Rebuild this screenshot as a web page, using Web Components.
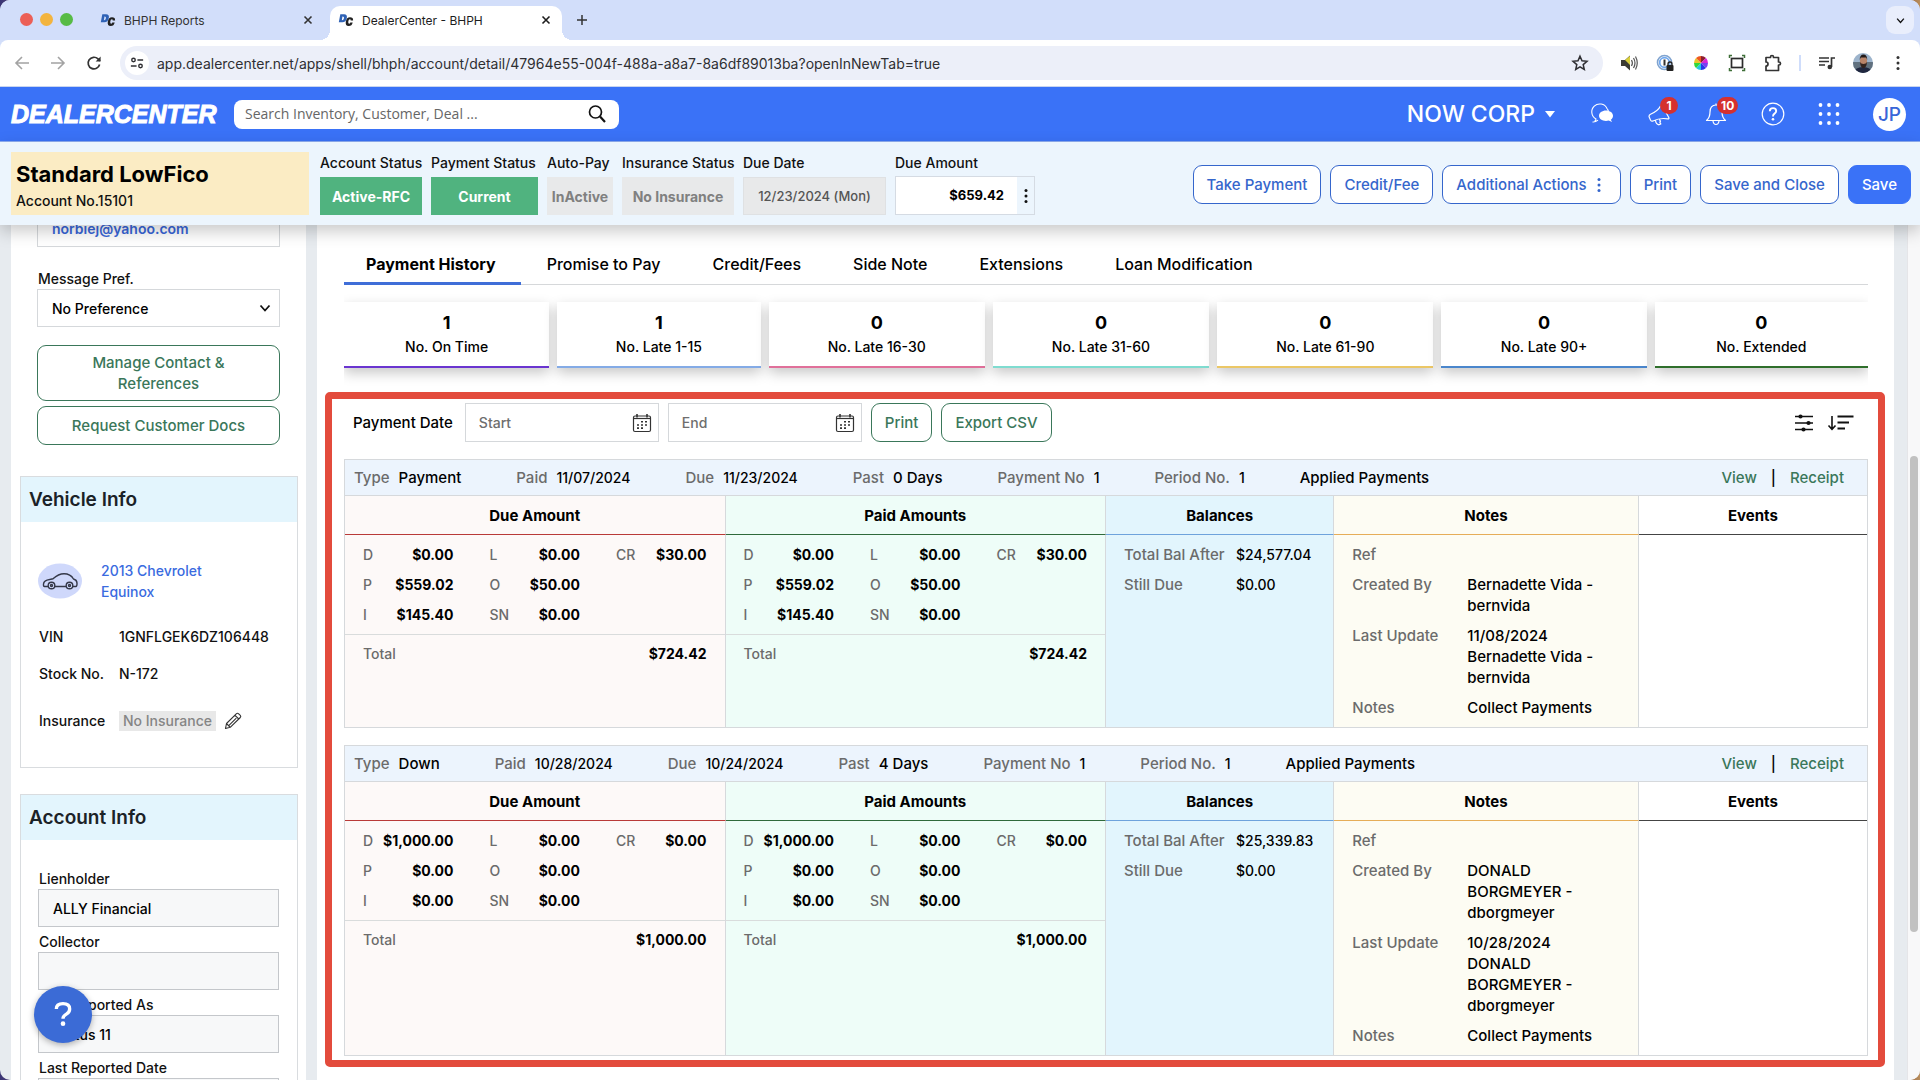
<!DOCTYPE html>
<html lang="en">
<head>
<meta charset="utf-8">
<title>DealerCenter - BHPH</title>
<style>
  html { height: 100%; background: linear-gradient(90deg, #3a3474, #5d4a78 1%, #8a5a45 99%, #b98d5a); }
  body { margin: 0; height: 100%; font-family: Inter, "Liberation Sans", sans-serif; font-size: 14px; line-height: 21px; font-weight: 500; color: #111; overflow: hidden; }
</style>
</head>
<body>
<bhph-window></bhph-window>
<script>
const ICONS = {
  close: ['0 0 12 12', '<path d="M2.5 2.5l7 7M9.5 2.5l-7 7" fill="none" stroke="currentColor" stroke-width="1.6"/>'],
  plus: ['0 0 12 12', '<path d="M6 1v10M1 6h10" fill="none" stroke="currentColor" stroke-width="1.5"/>'],
  chevron: ['0 0 12 12', '<path d="M1.5 3.5L6 8.5l4.500-5" fill="none" stroke="currentColor" stroke-width="1.800"/>'],
  back: ['0 0 16 16', '<path d="M15 8H2M8 2L2 8l6 6" fill="none" stroke="currentColor" stroke-width="1.6"/>'],
  forward: ['0 0 16 16', '<path d="M1 8h13M8 2l6 6-6 6" fill="none" stroke="currentColor" stroke-width="1.6"/>'],
  reload: ['0 0 16 16', '<path d="M13.600 9.500A5.800 5.800 0 1 1 12 3.900L14 6" fill="none" stroke="currentColor" stroke-width="1.700"/><path d="M14.600 1.600v5h-5z" fill="currentColor"/>'],
  tune: ['0 0 16 16', '<g fill="none" stroke="currentColor" stroke-width="1.600"><circle cx="4" cy="4.500" r="2"/><path d="M8.500 4.500H15M1 11.500h6.500"/><circle cx="12" cy="11.500" r="2"/></g>'],
  star: ['0 0 18 18', '<path d="M9 2.200l2 4.600 5 .5-3.800 3.300 1.100 4.900L9 12.900l-4.300 2.600 1.100-4.900L2 7.300l5-.5z" fill="none" stroke="currentColor" stroke-width="1.500"/>'],
  speaker: ['0 0 18 18', '<path d="M1 6h4l5-4.500v15L5 12H1z" fill="#3b3b33"/><path d="M5 6l5-4v9z" fill="#d9cf3a"/><path d="M11.500 6q1.800 3 0 6M13.500 4q3 5 0 10M15.500 2.500q3.500 6.500 0 13" fill="none" stroke="#555" stroke-width="1.200"/>'],
  onepass: ['0 0 18 18', '<circle cx="8.500" cy="8.500" r="7" fill="#fff" stroke="#7fa3cf" stroke-width="1.600"/><circle cx="8.500" cy="8.500" r="4.800" fill="none" stroke="#6fa8f0" stroke-width="1.800"/><path d="M8.500 5.500v6" stroke="#333" stroke-width="2"/><rect x="10.500" y="11" width="7" height="6" rx="1" fill="#222"/><path d="M12 11.500V10a2 2 0 0 1 4 0v1.500" fill="none" stroke="#222" stroke-width="1.300"/>'],
  wheel: ['-9 -9 18 18', '<g><path d="M0 0L0-7A7 7 0 0 1 5-5z" fill="#8d1f2f"/><path d="M0 0L5-5A7 7 0 0 1 7 0z" fill="#d625d6"/><path d="M0 0L7 0A7 7 0 0 1 5 5z" fill="#7a3ff0"/><path d="M0 0L5 5A7 7 0 0 1 0 7z" fill="#2a35e8"/><path d="M0 0L0 7A7 7 0 0 1-5 5z" fill="#25c7e0"/><path d="M0 0L-5 5A7 7 0 0 1-7 0z" fill="#2fd63a"/><path d="M0 0L-7 0A7 7 0 0 1-5-5z" fill="#e8c62a"/><path d="M0 0L-5-5A7 7 0 0 1 0-7z" fill="#ef5a1f"/></g>'],
  capture: ['0 0 18 18', '<rect x="3.500" y="4.500" width="11" height="9" fill="none" stroke="#2b2b2b" stroke-width="1.700"/><path d="M1.500 4V1.500H4M14 1.500h2.500V4M16.500 14v2.500H14M4 16.500H1.500V14" fill="none" stroke="#3f6f38" stroke-width="1.500"/>'],
  puzzle: ['0 0 18 18', '<path d="M2 3.500h4.500V3a1.500 1.500 0 0 1 3 0v.5H14.500V8h.5a1.500 1.500 0 0 1 0 3h-.5v5.500H2V12a2 2 0 0 0 0-4z" fill="none" stroke="#333" stroke-width="1.700" stroke-linejoin="round"/>'],
  playlist: ['0 0 18 18', '<path d="M1 4h10M1 7.500h10M1 11h6" stroke="#333" stroke-width="1.700"/><path d="M13.500 13V4H17" fill="none" stroke="#333" stroke-width="1.700"/><circle cx="11.800" cy="13" r="2.300" fill="#333"/>'],
  person: ['0 0 20 20', '<clipPath id="c"><circle cx="10" cy="10" r="10"/></clipPath><g clip-path="url(#c)"><rect width="20" height="20" fill="#9db4cc"/><path d="M0 9h20v11H0z" fill="#61717f"/><path d="M1 20q1-6 9-6t9 6z" fill="#20273f"/><ellipse cx="10.500" cy="8" rx="3.600" ry="5" fill="#b98468"/><path d="M6.700 7q0-5.500 3.800-5.500T14.200 7l-1-2.500H7.800z" fill="#221a18"/><path d="M7 9q.5 6 3.500 6t3.500-6q-1 2-3.500 2T7 9z" fill="#33231d"/></g>'],
  kebab: ['0 0 16 16', '<g fill="currentColor"><circle cx="8" cy="2.500" r="1.500"/><circle cx="8" cy="8" r="1.500"/><circle cx="8" cy="13.500" r="1.500"/></g>'],
  search: ['0 0 20 20', '<circle cx="8.500" cy="8" r="6" fill="none" stroke="currentColor" stroke-width="1.700"/><path d="M13 12.500l5 5.500" stroke="currentColor" stroke-width="2.200"/>'],
  caret: ['0 0 10 8', '<path d="M0 1h10L5 7.500z" fill="currentColor"/>'],
  chat: ['0 0 24 20', '<path d="M4.500 17.500q1.500-1.200 1.500-2.500A8 8 0 1 1 17 4.500q1 1.200 1.400 2.500M2.500 18q3 .3 5.500-1.800" fill="none" stroke="currentColor" stroke-width="1.100"/><path d="M16 6.500c4 0 7 2.300 7 5.200 0 1.700-.8 3-2.200 4l1.300 2.300-3.400-1.400q-1.300.3-2.700.3c-4 0-7-2.300-7-5.200s3-5.200 7-5.200z" fill="currentColor"/>'],
  horn: ['0 0 24 24', '<path d="M2 14.500q0-1.500 1.500-2.200Q11 9 13.500 4q.8-1.600 1.800 0l6.500 11.500q.6 1.500-1 1.400Q13 15.500 6 19q-1.500.6-2.400-.8zM8.500 18.200q.3 4 3.500 4.600l1.800-.9-1-1.700.7-.8-1.200-2.300" fill="none" stroke="currentColor" stroke-width="1.200" stroke-linejoin="round"/>'],
  bell: ['0 0 24 24', '<path d="M2.500 18.500q3.500-3 3.500-8.500 0-7 6-7t6 7q0 5.500 3.500 8.500zM12 3V1.500M9 19q.5 3.500 3 3.500t3-3.500" fill="none" stroke="currentColor" stroke-width="1.200" stroke-linejoin="round"/>'],
  help: ['0 0 24 24', '<circle cx="12" cy="12" r="10.800" fill="none" stroke="currentColor" stroke-width="1.200"/><path d="M8.800 9.300q0-3.200 3.200-3.200t3.200 2.900q0 1.500-1.700 2.600-1.500 1-1.500 2.800" fill="none" stroke="currentColor" stroke-width="1.900"/><circle cx="12" cy="17.300" r="1.300" fill="currentColor"/>'],
  apps: ['0 0 22 22', '<g fill="currentColor"><circle cx="2.500" cy="2" r="1.900"/><circle cx="11" cy="2" r="1.900"/><circle cx="19.500" cy="2" r="1.900"/><circle cx="2.500" cy="11" r="1.900"/><circle cx="11" cy="11" r="1.900"/><circle cx="19.500" cy="11" r="1.900"/><circle cx="2.500" cy="20" r="1.900"/><circle cx="11" cy="20" r="1.900"/><circle cx="19.500" cy="20" r="1.900"/></g>'],
  calendar: ['0 0 20 20', '<g fill="none" stroke="#333" stroke-width="1.200"><rect x="1.500" y="3" width="17" height="15.500" rx="1.500"/><path d="M1.500 5.500h17"/><path d="M5 1v3.500M15 1v3.500" stroke-width="1.600"/></g><g fill="#333"><path d="M9 8h2v1.600H9zM13 8h2v1.600h-2zM5 11.200h2v1.600H5zM9 11.200h2v1.600H9zM13 11.200h2v1.600h-2zM5 14.300h2v1.600H5zM9 14.300h2v1.600H9z"/></g>'],
  sliders: ['0 0 18 18', '<path d="M0 2.500h18M0 9h18M0 15.500h18" stroke="#111" stroke-width="1.600"/><g fill="#111"><circle cx="5.500" cy="2.500" r="2.100"/><circle cx="13.500" cy="9" r="2.100"/><circle cx="8.500" cy="15.500" r="2.100"/></g>'],
  sort: ['0 0 26 18', '<path d="M4 2v13M.5 11.500L4 15.300l3.500-3.800" fill="none" stroke="#111" stroke-width="1.600"/><path d="M9.500 2.500H25.500M9.500 8.500h11.500M9.500 14.500h7.500" stroke="#111" stroke-width="1.800"/>'],
  car: ['0 0 44 36', '<ellipse cx="22" cy="18" rx="22" ry="17.500" fill="#cfd8fb"/><g fill="none" stroke="#343849" stroke-width="1.400"><path d="M10 23.500H6.500q-1.200 0-1-2.500.2-3 3.500-3.900l6-1.300q5.500-5 11-5 6.500 0 9.500 5.200 3.300.8 3.500 4 .1 3.200-1 3.500H35M17 23.500h11"/><circle cx="13.500" cy="22.500" r="3.300"/><circle cx="31.500" cy="22.500" r="3.300"/><circle cx="13.500" cy="22.500" r="1"/><circle cx="31.500" cy="22.500" r="1"/></g>'],
  pencil: ['0 0 18 18', '<path d="M1.500 16.500l1-5L12.500 1.700q1-.9 2.200.1l1.600 1.500q1 1.100 0 2.200L6.200 15.300zM11 3.300l3.800 3.700M2.500 11.500l3.700 3.800M12.300 6.200L5 13.300" fill="none" stroke="#333" stroke-width="1.100" stroke-linejoin="round"/>'],
  favicon: ['0 0 18 16', '<path d="M2.600 1.500h4.200q4 0 3.100 4.400-.9 4.600-5 4.600H.9zM5 4L4.300 8.200q1.900.3 2.400-2.200Q7.200 3.800 5 4z" fill="#2f62b5" fill-rule="evenodd"/><path d="M17 8.500h-2.700q.2-1.400-1-1.400-1.300 0-1.700 2.400-.4 2.600.8 2.600 1.100 0 1.400-1.400h2.700q-.7 4-4.500 4-4 0-3.200-5.100Q9.700 4.800 13.500 4.800T17 8.500z" fill="#222"/>'],
  question: ['0 0 24 32', '<path d="M4 9.500Q4 3 12 3t8 6.300q0 3.700-4 6.200-4 2.300-4 5.500" fill="none" stroke="currentColor" stroke-width="4"/><circle cx="12" cy="27" r="2.800" fill="currentColor"/>']
};
const RESET = `
  *, *::before, *::after { box-sizing: border-box; }
  button, input, select { font: inherit; color: inherit; margin: 0; padding: 0; border: 0; background: none; letter-spacing: inherit; }
  button { cursor: pointer; }
  input { min-width: 0; width: 100%; outline: 0; }
  a { color: inherit; text-decoration: none; }
  h1, h2, p, dl, dd, dt { margin: 0; font-size: inherit; font-weight: inherit; }
  :host([hidden]) { display: none; }
`;
function define(name, render) {
  customElements.define(name, class extends HTMLElement {
    connectedCallback() {
      if (this.shadowRoot) return;
      const t = document.createElement('template');
      t.innerHTML = `<style>${RESET}</style>` + render(this);
      this.attachShadow({ mode: 'open' }).append(t.content.cloneNode(true));
    }
  });
}

define('dc-icon', el => {
  const [box, body] = ICONS[el.getAttribute('name')];
  return `<style>:host{display:inline-flex;flex:none;width:var(--s,18px);height:var(--h,var(--s,18px))} svg{width:100%;height:100%;overflow:visible}</style>
  <svg viewBox="${box}" aria-hidden="true">${body}</svg>`;
});

define('browser-tab', el => `<style>
  :host{display:flex;align-items:center;gap:8px;width:232px;height:34px;padding:0 10px 6px 8px;font-size:12px;font-weight:400;color:#333}
  :host([active]){background:#fff;border-radius:10px 10px 0 0;color:#1d1d1d;position:relative}
  :host([active])::before,:host([active])::after{content:"";position:absolute;bottom:0;width:10px;height:10px}
  :host([active])::before{left:-10px;background:radial-gradient(circle at 0 0,transparent 10px,#fff 10px)}
  :host([active])::after{right:-10px;background:radial-gradient(circle at 100% 0,transparent 10px,#fff 10px)}
  span{flex:1;white-space:nowrap} button{display:flex}
  </style><dc-icon name="favicon" style="--s:16px"></dc-icon><span><slot></slot></span>
  <button aria-label="Close tab"><dc-icon name="close" style="--s:12px"></dc-icon></button>`);

define('browser-chrome', () => `<style>
  :host{display:block;background:#d2defa;color:#333}
  .strip{display:flex;align-items:flex-end;height:40px;padding:0 6px 0 20px}
  .lights{display:flex;gap:7px;padding:0 19px 14px 0}
  .lights i{width:13px;height:13px;border-radius:50%;background:var(--c)}
  .tabs{display:flex;gap:6px}
  .new{display:flex;margin:0 0 14px 14px}
  .more{display:grid;place-items:center;margin:0 0 6px auto;width:28px;height:28px;border-radius:9px;background:#e9eefc;color:#111}
  .bar{display:flex;align-items:center;height:47px;padding:0 14px;background:#fff;border-radius:8px 8px 0 0;border-bottom:1px solid #c9d5ef}
  .nav{display:flex;gap:20px;width:106px} .nav button{display:flex}
  .off{color:#a3a3a3}
  .url{flex:1;display:flex;align-items:center;gap:8px;height:34px;border-radius:17px;background:#eceff9;padding:0 14px 0 5px;font-size:14px;font-weight:400;color:#2f2f33}
  .chip{flex:none;display:grid;place-items:center;width:24px;height:24px;border-radius:50%;background:#fff}
  .ext{display:flex;align-items:center;gap:18px;padding-left:17px}
  .sep{width:2px;height:16px;margin:0 -1px;background:#cfddfb}
  .me{margin:0 -1px}
  </style>
  <div class="strip"><div class="lights"><i style="--c:#ec5f56"></i><i style="--c:#f3b43e"></i><i style="--c:#57bb45"></i></div>
   <div class="tabs"><browser-tab>BHPH Reports</browser-tab><browser-tab active>DealerCenter - BHPH</browser-tab></div>
   <button class="new" aria-label="New tab"><dc-icon name="plus" style="--s:12px"></dc-icon></button>
   <button class="more" aria-label="Search tabs"><dc-icon name="chevron" style="--s:9px"></dc-icon></button></div>
  <div class="bar"><div class="nav"><button class="off" aria-label="Back"><dc-icon name="back" style="--s:16px"></dc-icon></button><button class="off" aria-label="Forward"><dc-icon name="forward" style="--s:16px"></dc-icon></button><button aria-label="Reload"><dc-icon name="reload" style="--s:16px"></dc-icon></button></div>
   <div class="url"><span class="chip"><dc-icon name="tune" style="--s:14px"></dc-icon></span><input aria-label="Address" value="app.dealercenter.net/apps/shell/bhph/account/detail/47964e55-004f-488a-a8a7-8a6df89013ba?openInNewTab=true"><dc-icon name="star"></dc-icon></div>
   <div class="ext"><dc-icon name="speaker"></dc-icon><dc-icon name="onepass"></dc-icon><dc-icon name="wheel"></dc-icon><dc-icon name="capture"></dc-icon><dc-icon name="puzzle"></dc-icon><span class="sep"></span><dc-icon name="playlist"></dc-icon><dc-icon class="me" name="person" style="--s:20px"></dc-icon><dc-icon name="kebab" style="--s:16px"></dc-icon></div></div>`);

define('notice-icon', el => `<style>
  :host{display:block;position:relative;width:24px;height:24px}
  b{position:absolute;left:13px;top:-5px;min-width:18px;height:17px;padding:0 4px;border-radius:9px;background:#d5302f;font-size:12px;line-height:17px;font-weight:700;text-align:center}
  </style><dc-icon name="${el.getAttribute('name')}" style="--s:24px"></dc-icon><b><slot></slot></b>`);

define('app-header', () => `<style>
  :host{display:flex;align-items:center;height:55px;padding:0 14px 0 11px;background:#3a72f7;color:#fff;border-bottom:1px solid #8faef2}
  .logo{font:italic 700 25px/30px "Liberation Sans",sans-serif;-webkit-text-stroke:1px #fff;width:223px;flex:none}
  .search{display:flex;align-items:center;width:385px;height:29px;padding:0 12px 0 11px;background:#fff;border-radius:8px;color:#111}
  .search input{font:400 14px/20px "Open Sans",sans-serif} ::placeholder{color:#666;opacity:1}
  .right{display:flex;align-items:center;gap:33px;margin-left:auto}
  .org{display:flex;align-items:center;gap:10px;margin-right:2px;font-size:23px}
  button{display:flex}
  .me{display:grid;place-items:center;width:33px;height:33px;border-radius:50%;background:#fff;color:#3866d8;font-size:19px;font-weight:500}
  </style>
  <a class="logo" href="#">DEALERCENTER</a>
  <div class="search"><input aria-label="Search" placeholder="Search Inventory, Customer, Deal ..."><dc-icon name="search" style="--s:20px"></dc-icon></div>
  <div class="right"><button class="org">NOW CORP <dc-icon name="caret" style="--s:10px;--h:8px"></dc-icon></button>
  <dc-icon name="chat" style="--s:24px;--h:20px"></dc-icon><notice-icon name="horn">1</notice-icon><notice-icon name="bell">10</notice-icon><dc-icon name="help" style="--s:24px"></dc-icon><dc-icon name="apps" style="--s:22px"></dc-icon><button class="me">JP</button></div>`);

define('dc-button', el => `<style>
  :host{display:block;font-size:15px}
  button{display:flex;align-items:center;justify-content:center;gap:4px;width:100%;min-height:39px;padding:var(--pad,0 13px);border:1px solid currentColor;border-radius:9px;background:#fff;color:#3566cc;line-height:21px;white-space:var(--wrap,nowrap)}
  :host([tone=green]) button{color:#3a775a}
  :host([tone=solid]) button{background:#3a72f7;border-color:#3a72f7;color:#fff}
  </style><button><slot></slot></button>`);

define('status-field', el => `<style>
  :host{display:block;flex:none;width:var(--w)}
  span,output{display:block;white-space:nowrap}
  output{display:grid;place-items:center;height:38px;margin-top:4px;background:#e8e9ea;color:#808080;font-weight:700}
  :host([tone=good]) output{background:#50b37f;color:#fff}
  :host([tone=date]) output{border:1px solid #dfe1e3;color:#555;font-size:13px;font-weight:500}
  </style><span id="l">${el.getAttribute('label')}</span><output aria-labelledby="l"><slot></slot></output>`);

define('account-bar', () => `<style>
  :host{display:flex;align-items:flex-start;gap:9px;height:83px;padding:10px 9px 0 11px;background:#ecf5fd;box-shadow:0 6px 16px rgba(0,0,0,.22);position:relative;z-index:2}
  .who{width:298px;height:63px;margin-right:2px;padding:8px 5px;background:#fbecc4;flex:none}
  h1{font-size:22px;line-height:28px;font-weight:700;color:#000} .who p{line-height:26px} .who b{font-weight:500}
  .due{width:140px;flex:none} .due label{display:block}
  .box{display:flex;height:39px;margin-top:3px;border:1px solid #d5dbe3;background:#fff}
  .box input{padding-right:13px;text-align:right;font-size:13px;font-weight:700;color:#000}
  .box button{display:grid;place-items:center;flex:none;width:17px;background:#ecf5fd}
  .acts{display:flex;gap:9px;margin:13px 0 0 auto}
  </style>
  <div class="who"><h1>Standard LowFico</h1><p>Account No.<b>15101</b></p></div>
  <status-field label="Account Status" tone="good" style="--w:102px">Active-RFC</status-field>
  <status-field label="Payment Status" tone="good" style="--w:107px">Current</status-field>
  <status-field label="Auto-Pay" style="--w:66px">InActive</status-field>
  <status-field label="Insurance Status" style="--w:112px">No Insurance</status-field>
  <status-field label="Due Date" tone="date" style="--w:143px">12/23/2024 (Mon)</status-field>
  <div class="due"><label for="due">Due Amount</label><div class="box"><input id="due" value="$659.42"><button aria-label="Due amount options"><dc-icon name="kebab" style="--s:16px"></dc-icon></button></div></div>
  <div class="acts"><dc-button>Take Payment</dc-button><dc-button>Credit/Fee</dc-button><dc-button>Additional Actions <dc-icon name="kebab" style="--s:16px"></dc-icon></dc-button><dc-button>Print</dc-button><dc-button>Save and Close</dc-button><dc-button tone="solid">Save</dc-button></div>`);

define('text-field', el => `<style>
  :host{display:block} label{display:block;padding-left:1px}
  input{height:38px;padding:0 14px;border:1px solid #c4c7cb;background:#f7f8f9;color:#000}
  </style><label for="f">${el.getAttribute('label')}</label><input id="f" value="${el.getAttribute('value') || ''}">`);

define('info-card', el => `<style>
  :host{display:block;border:1px solid #d9dcdf;background:#fff}
  h2{height:45px;padding:0 8px;background:#e3f5fd;font-size:19px;line-height:45px;font-weight:600;color:#1b2227}
  div{padding:var(--body)}
  </style><h2>${el.getAttribute('heading')}</h2><div><slot></slot></div>`);

define('contact-panel', () => `<style>
  :host{display:block;padding:0 18px 0 17px}
  .mail{display:flex;align-items:center;height:38px;padding:0 14px;border:1px solid #d5d8db;color:#3866d8;font-weight:600}
  label{display:block;margin-top:21px;padding-left:1px}
  .sel{display:grid;align-items:center;border:1px solid #d5d8db;height:38px}
  .sel>*{grid-area:1/1} .sel dc-icon{justify-self:end;margin-right:8px}
  select{appearance:none;width:100%;height:36px;padding:0 14px;color:#000}
  .b1{margin-top:18px;--wrap:normal;--pad:6px 50px} .b2{margin-top:5px}
  </style>
  <a class="mail" href="#">norbiej@yahoo.com</a>
  <label for="p">Message Pref.</label><div class="sel"><select id="p"><option>No Preference</option></select><dc-icon name="chevron" style="--s:12px"></dc-icon></div>
  <dc-button class="b1" tone="green">Manage Contact &amp; References</dc-button><dc-button class="b2" tone="green">Request Customer Docs</dc-button>`);

define('vehicle-info', () => `<style>
  :host{display:block}
  .car{display:flex;align-items:center;gap:19px;height:42px;color:#3a6be0}
  dl{display:grid;grid-template-columns:80px 1fr;padding-left:1px;margin-top:24px;row-gap:16px} dd{display:flex;align-items:center;gap:8px}
  .last{margin-top:10px}
  .chip{padding:0 4px;background:#e8e8e8;color:#858585;line-height:20px;white-space:nowrap}
  dd button{display:flex}
  </style>
  <div class="car"><dc-icon name="car" style="--s:44px;--h:36px"></dc-icon><a href="#">2013 Chevrolet<br>Equinox</a></div>
  <dl><dt>VIN</dt><dd>1GNFLGEK6DZ106448</dd><dt>Stock No.</dt><dd>N-172</dd><dt class="last">Insurance</dt><dd class="last"><span class="chip">No Insurance</span><button aria-label="Edit insurance"><dc-icon name="pencil"></dc-icon></button></dd></dl>`);

define('side-panel', () => `<style>
  :host{display:block;flex:none;width:295px;background:#fff;padding:0 8px 0 9px}
  .in{margin-top:-16px} info-card{display:block}
  .v{margin-top:31px;--body:38px 17px 36px} .a{margin-top:26px;--body:28px 18px 28px 17px}
  .form{display:grid;gap:4px}
  </style><div class="in"><contact-panel></contact-panel>
  <info-card class="v" heading="Vehicle Info"><vehicle-info></vehicle-info></info-card>
  <info-card class="a" heading="Account Info"><div class="form"><text-field label="Lienholder" value="ALLY Financial"></text-field><text-field label="Collector"></text-field><text-field label="Last Reported As" value="Status 11"></text-field><text-field label="Last Reported Date"></text-field></div></info-card></div>`);

define('tab-nav', () => `<style>
  :host{display:flex;border-bottom:1px solid #d6d8da;font-size:16px;padding-top:21px;color:#000}
  button{height:39px;margin-bottom:-1px;padding:0 26px;white-space:nowrap;line-height:36px;border-bottom:3px solid transparent}
  .on{padding:0 25px 0 22px;border-color:#3f6ed8;font-weight:700}
  </style><button class="on">Payment History</button><button>Promise to Pay</button><button>Credit/Fees</button><button>Side Note</button><button>Extensions</button><button>Loan Modification</button>`);

define('stat-card', el => `<style>
  :host{display:block;height:66px;padding-top:9px;text-align:center;background:#fff;border-bottom:2px solid var(--c);box-shadow:0 5px 12px rgba(0,0,0,.22);color:#000}
  b{display:block;font-size:18px;line-height:24px;font-weight:700} span{display:block;line-height:24px}
  </style><b>${el.getAttribute('count')}</b><span><slot></slot></span>`);

define('date-field', el => `<style>
  :host{display:flex;align-items:center;width:194px;height:39px;padding:0 6px 0 13px;border:1px solid #d5d8db;background:#fff}
  ::placeholder{color:#6e6e6e;opacity:1} button{display:flex}
  </style><input aria-label="${el.getAttribute('label')}" placeholder="${el.getAttribute('label')}"><button aria-label="Pick date"><dc-icon name="calendar" style="--s:20px"></dc-icon></button>`);

define('filter-bar', () => `<style>
  :host{display:flex;align-items:center;gap:9px;padding-left:9px;color:#000}
  .t{font-size:15px;margin-right:3px}
  .ic{display:flex;gap:15px;margin:0 14px 0 auto} .ic button{display:flex}
  </style><span class="t">Payment Date</span><date-field label="Start"></date-field><date-field label="End"></date-field><dc-button tone="green">Print</dc-button><dc-button tone="green">Export CSV</dc-button>
  <div class="ic"><button aria-label="Filter"><dc-icon name="sliders"></dc-icon></button><button aria-label="Sort"><dc-icon name="sort" style="--s:26px;--h:18px"></dc-icon></button></div>`);

define('amount-panel', el => {
  const v = el.getAttribute('values').split(' ');
  const item = (k, i) => `<div><dt>${k}</dt><dd>${v[i]}</dd></div>`;
  return `<style>
  :host{display:block}
  dl{display:grid;grid-template-columns:repeat(3,1fr);grid-template-rows:repeat(3,21px);grid-auto-flow:column;gap:9px 36px;padding:9px 18px}
  dl div,p{display:flex;justify-content:space-between} dt,p span{color:#6b6b6b} dd,b{font-weight:700;color:#000}
  p{padding:8px 18px;border-top:1px solid #d9dcdc}
  </style><dl>${['D','P','I','L','O','SN','CR'].map(item).join('')}</dl><p><span>Total</span><b>${v[7]}</b></p>`;
});

define('pair-list', el => `<style>
  :host{display:block;padding:9px 18px;font-size:15px}
  dl{display:grid;grid-template-columns:var(--k) 1fr;row-gap:9px;min-width:0} dt{color:#6b6b6b;white-space:nowrap} dd{color:#000;min-height:21px}
  :host([money]) dd{font-size:14px}
  </style><dl>${el.getAttribute('pairs').split(';').map(p => { const [k, v] = p.split('='); return `<dt>${k}</dt><dd>${v}</dd>`; }).join('')}</dl>`);

define('payment-card', el => {
  const a = n => el.getAttribute(n);
  const fact = (k, v, c = '') => `<span class="f ${c}"><i>${k}</i>${v}</span>`;
  return `<style>
  :host{display:block;border:1px solid #d6d9dc;background:#fff;color:#000}
  .top{display:flex;align-items:center;gap:55px;height:36px;padding:0 23px 0 9px;background:#ecf4fd;border-bottom:1px solid #d6d9dc;white-space:nowrap;font-size:15px}
  .f{display:flex;gap:9px;font-size:14px} .f.word{font-size:15px} i{font-style:normal;font-size:15px;color:#6b6b6b}
  .links{display:flex;gap:14px;margin-left:auto} a{color:#3a775a}
  table{width:100%;table-layout:fixed;border-collapse:separate;border-spacing:0}
  th{height:39px;padding:0;font-size:15px;font-weight:700;border-bottom:1px solid var(--c)} td{padding:0;vertical-align:top}
  th,td{border-right:1px solid #d6d9dc} th:last-child,td:last-child{border-right:0}
  .due{--c:#b93a38;background:#fdf9f8} .paid{--c:#2f6a3b;background:#eefdf8} .bal{--c:#6ea3dc;background:#e2f5fd} .note{--c:#e6ad58;background:#fdfcf3} .ev{--c:#444}
  .bal pair-list{--k:112px;margin-right:-18px} .note pair-list{--k:115px}
  </style>
  <div class="top">${fact('Type', a('type'), 'word')}${fact('Paid', a('paid'))}${fact('Due', a('due'))}${fact('Past', a('past'), 'word')}${fact('Payment No', a('no'))}${fact('Period No.', a('period'))}<span>Applied Payments</span>
   <span class="links"><a href="#">View</a><span>|</span><a href="#">Receipt</a></span></div>
  <table><colgroup><col style="width:25%"><col style="width:25%"><col style="width:15%"><col style="width:20%"><col style="width:15%"></colgroup>
  <thead><tr><th class="due">Due Amount</th><th class="paid">Paid Amounts</th><th class="bal">Balances</th><th class="note">Notes</th><th class="ev">Events</th></tr></thead>
  <tbody><tr><td class="due"><amount-panel values="${a('amounts')}"></amount-panel></td><td class="paid"><amount-panel values="${a('amounts')}"></amount-panel></td>
  <td class="bal"><pair-list money pairs="Total Bal After=${a('balance')};Still Due=$0.00"></pair-list></td>
  <td class="note"><pair-list pairs="Ref=;Created By=${a('by')};Last Update=${a('updated')}<br>${a('by')};Notes=Collect Payments"></pair-list></td><td class="ev"></td></tr></tbody></table>`;
});

define('payment-history', () => `<style>
  :host{display:block;flex:1;min-width:0;background:#fff;padding:0 26px 0 27px}
  .stats{display:grid;grid-template-columns:205fr 203fr 216fr 216fr 216fr 205fr 213fr;gap:8px;margin-top:17px;clip-path:inset(-8px 0 -24px 0)}
  .mark{margin:24px -17px 0 -19px;padding:4px 10px 4px 12px;border:7px solid #e34b3c;border-radius:5px}
  .list{display:grid;gap:17px;margin-top:17px}
  </style><tab-nav></tab-nav>
  <div class="stats"><stat-card count="1" style="--c:#6a35d0">No. On Time</stat-card><stat-card count="1" style="--c:#84abe6">No. Late 1-15</stat-card><stat-card count="0" style="--c:#e0709a">No. Late 16-30</stat-card><stat-card count="0" style="--c:#7fdcd0">No. Late 31-60</stat-card><stat-card count="0" style="--c:#ebc766">No. Late 61-90</stat-card><stat-card count="0" style="--c:#4a86cc">No. Late 90+</stat-card><stat-card count="0" style="--c:#2f6f2c">No. Extended</stat-card></div>
  <section class="mark"><filter-bar></filter-bar><div class="list">
   <payment-card type="Payment" paid="11/07/2024" due="11/23/2024" past="0 Days" no="1" period="1" amounts="$0.00 $559.02 $145.40 $0.00 $50.00 $0.00 $30.00 $724.42" balance="$24,577.04" by="Bernadette Vida - bernvida" updated="11/08/2024"></payment-card>
   <payment-card type="Down" paid="10/28/2024" due="10/24/2024" past="4 Days" no="1" period="1" amounts="$1,000.00 $0.00 $0.00 $0.00 $0.00 $0.00 $0.00 $1,000.00" balance="$25,339.83" by="DONALD BORGMEYER - dborgmeyer" updated="10/28/2024"></payment-card>
  </div></section>`);

define('help-fab', () => `<style>
  :host{position:absolute;left:34px;bottom:37px;z-index:3}
  button{display:grid;place-items:center;width:58px;height:57px;border-radius:50%;background:#3b6bd6;color:#fff;box-shadow:0 2px 6px rgba(0,0,0,.3)}
  </style><button aria-label="Help"><dc-icon name="question" style="--s:20px;--h:27px"></dc-icon></button>`);

define('scroll-rail', () => `<style>
  :host{display:flex;flex:none;flex-direction:column;width:13px;background:#f8f8f9;border-left:1px solid #e5e5e8;padding-left:2px}
  :host::before{content:"";flex:231}
  i{flex:476;width:8px;border-radius:4px;background:#c1c1c1}
  :host::after{content:"";flex:148}
  </style><i></i>`);

define('bhph-window', () => `<style>
  :host{display:flex;flex-direction:column;height:100vh;border-radius:10px;overflow:hidden;position:relative;background:#e7ebef}
  main{flex:1;min-height:0;display:flex;overflow:hidden;padding-left:11px;gap:11px}
  scroll-rail{margin-left:2px}
  </style><browser-chrome></browser-chrome><app-header></app-header><account-bar></account-bar>
  <main><side-panel></side-panel><payment-history></payment-history><scroll-rail></scroll-rail></main><help-fab></help-fab>`);
</script>
</body>
</html>
